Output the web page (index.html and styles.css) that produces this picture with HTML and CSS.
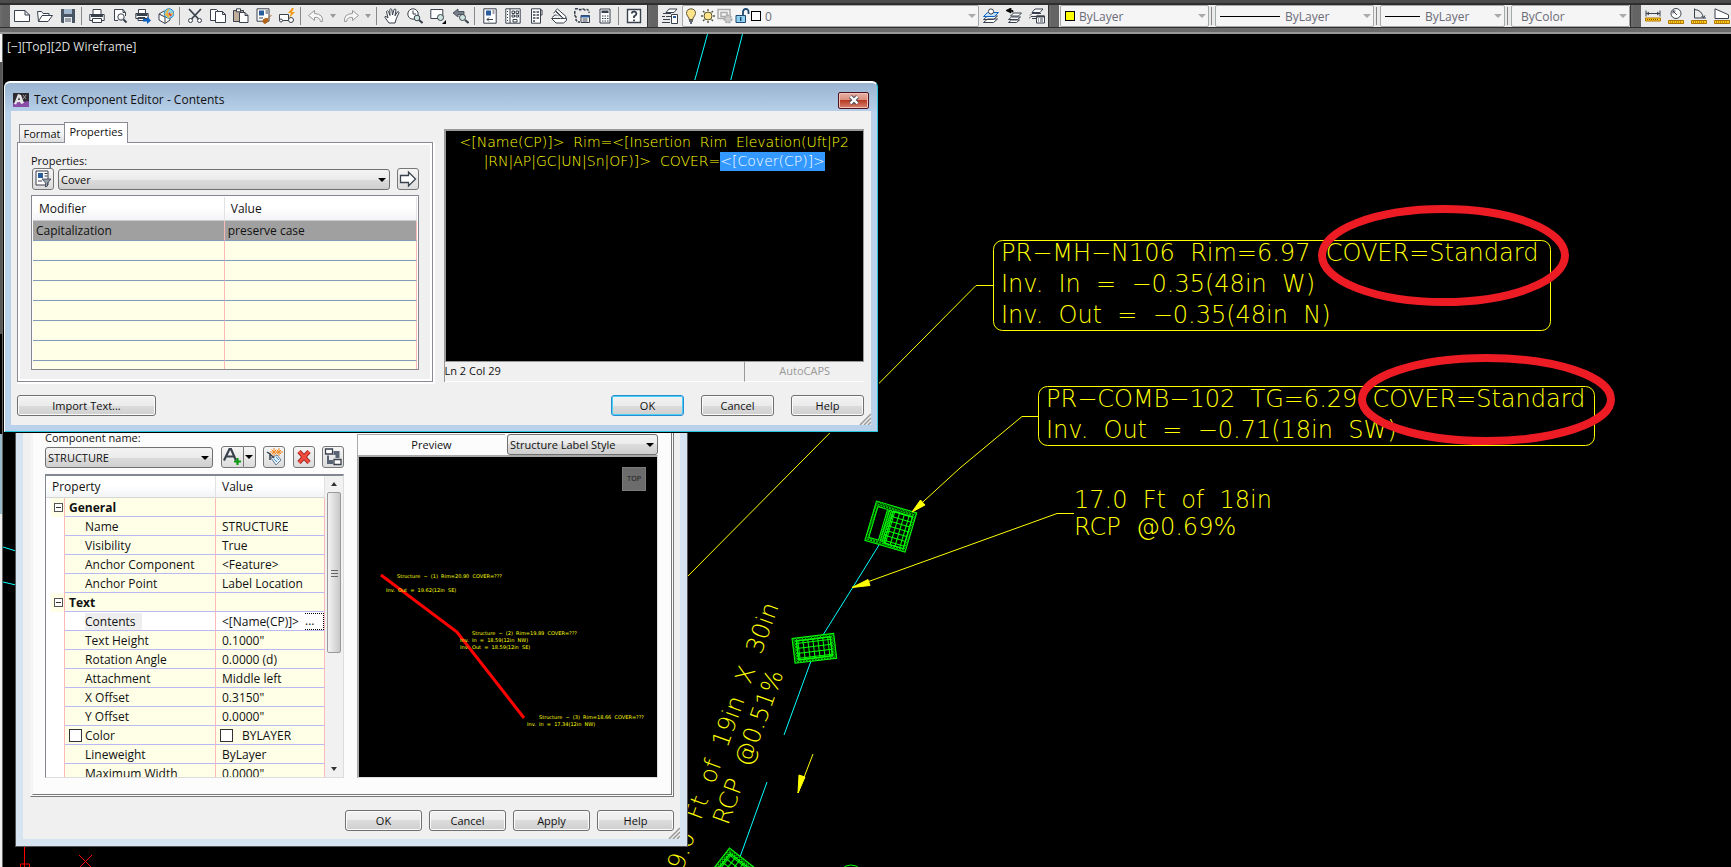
FILE: index.html
```html
<!DOCTYPE html>
<html lang="en">
<head>
<meta charset="utf-8">
<title>Text Component Editor - Contents</title>
<link rel="stylesheet" href="styles.css">
</head>
<body>
<div class="app">
<header class="ribbon">
  <div class="ribbon-strip"></div>
  <div class="toolbars">
    <div class="bar bar-main" role="toolbar" aria-label="Standard">
      <span class="grip"></span>
      <button class="tool" aria-label="New"><svg viewBox="0 0 16 16"><path class="o w" d="M.5 2.500H11l4.500 4.500V13.500H.5zM11 2.500V7h4.500"/></svg></button>
      <button class="tool" aria-label="Open"><svg viewBox="0 0 16 16"><path class="o w" d="M1.500 13.500L.5 3.500h4l1.500 2h6v2M1.500 13.500L5 7.500h10.500L11 13.500z"/></svg></button>
      <button class="tool" aria-label="Save"><svg viewBox="0 0 16 16"><path d="M1 1h14v14H2l-1-1z" fill="#4a5563"/><path d="M4 1h8v5H4z" fill="#9fb6cd"/><path d="M4 9h8v6H4z" fill="#e8edf2"/><path d="M5 11h6M5 13h6" stroke="#4a5563"/></svg></button>
      <span class="sep"></span>
      <button class="tool" aria-label="Print"><svg viewBox="0 0 16 16"><path class="o w" d="M4 6V1.500h8V6M.8 6.500h14.400v6H.8z"/><path class="o w" d="M3.500 10.500h9v4h-9z"/><path d="M2 8h12" stroke="#39414d" stroke-width="2"/></svg></button>
      <button class="tool" aria-label="Preview"><svg viewBox="0 0 16 16"><path class="o w" d="M2.500 12.500v-11H11l2.500 3V8M2.500 12.500H6M11 1.500v3h2.500"/><circle class="o" cx="9" cy="9" r="3.200" fill="#cfe6df"/><path class="o" stroke-width="2" d="M11.500 11.500l3 3"/></svg></button>
      <button class="tool" aria-label="Publish"><svg viewBox="0 0 16 16"><path class="o w" d="M3.500 5V1.500h7V5M.8 5.500h12.400v5H.8zM3 9.500h7v3H3z"/><path d="M1.500 7h11" stroke="#39414d" stroke-width="2"/><path d="M8 11h4V8.500l4 4-4 3.500v-2.500H8z" fill="#0b62c4"/></svg></button>
      <button class="tool" aria-label="3D DWF"><svg viewBox="0 0 16 16"><path class="o w" d="M1 6l5-3 6 3v6l-5 3.500L1 12zM1 6l6 3 5-3M7 9v6"/><circle cx="11" cy="5.500" r="4.800" fill="#8fd0ea" stroke="#2b8ac4"/><path d="M11 1q-4 4 0 9M7 6q4 3 8-1" fill="none" stroke="#f1b434" stroke-width="1.600"/><path d="M11 5l2 3" stroke="#e33" stroke-width="1.500"/></svg></button>
      <span class="sep"></span>
      <button class="tool" aria-label="Cut"><svg viewBox="0 0 16 16"><path d="M2 1l9.500 10M14 1L4.500 11" stroke="#39414d" stroke-width="1.800"/><circle class="o w" cx="3.500" cy="12.500" r="2"/><circle class="o w" cx="12.500" cy="12.500" r="2"/></svg></button>
      <button class="tool" aria-label="Copy"><svg viewBox="0 0 16 16"><path class="o w" d="M.5 1.500h6l2 2v9h-8z"/><path class="o w" d="M5.500 3.500h7l3 3v8h-10zM12.500 3.500v3h3"/></svg></button>
      <button class="tool" aria-label="Paste"><svg viewBox="0 0 16 16"><path class="o" style="fill:#c0ae9a" d="M.5 2.500h10v11H.5z"/><path class="o w" d="M3.500.8h4v3h-4z"/><path class="o w" d="M6.500 4.500H12l3 3v7H6.500zM12 4.500v3h3"/></svg></button>
      <button class="tool" aria-label="Match properties"><svg viewBox="0 0 16 16"><path class="o w" d="M1 .8h12v12.400H1z"/><path d="M3 2.500h5v5H3z" fill="#2a5d9c"/><path d="M9.500 3h2.500M9.500 5h2.500M3 10h4" stroke="#39414d"/><path d="M15.500 7l-4 4M7 12q3-3 5-1 1 3-3 4.500-2 0-2-3.500z" fill="#b4641a" stroke="#b4641a"/></svg></button>
      <button class="tool" aria-label="Block editor"><svg viewBox="0 0 16 16"><path class="o w" d="M.5 6.500h9v6h-9z"/><circle class="o w" cx="2" cy="12.500" r="1.500"/><circle class="o w" cx="12" cy="12" r="2.500"/><path d="M13 0l-4 5h3l-2 5 6-6h-3l2-4z" fill="#f49a1a"/></svg></button>
      <span class="sep"></span>
      <button class="tool" aria-label="Undo"><svg viewBox="0 0 16 16"><path class="g" d="M6.500 2.500l-6 5 6 5V9.500q5-1 6 4h2Q15.500 6 6.500 5.500z"/></svg></button>
      <button class="drop" aria-label="Undo list"></button>
      <button class="tool" aria-label="Redo"><svg viewBox="0 0 16 16"><path class="g" d="M9.500 2.500l6 5-6 5V9.500q-5-1-6 4h-2Q.5 6 9.500 5.500z"/></svg></button>
      <button class="drop" aria-label="Redo list"></button>
      <span class="sep"></span>
      <button class="tool" aria-label="Pan"><svg viewBox="0 0 16 16"><path class="o w" d="M5 15L1 9.500q-.5-1.500 1-1L4 10 2.500 3.500q1-1.500 2 0L6 7.500 5.800 1.500q1-1.500 2 0L8.500 7 10 1.500q1.300-1 2 .2L11 7.800l2.500-4q1.500-.5 1.500 1L12.500 10 11 15z"/></svg></button>
      <button class="tool" aria-label="Zoom realtime"><svg viewBox="0 0 16 16"><circle class="o w" cx="6" cy="6" r="5.200"/><path class="o" d="M6 2.500V6h3"/><circle class="o lens" cx="10" cy="10" r="2.800"/><path class="o" stroke-width="2" d="M12 12l3.500 3"/></svg></button>
      <button class="tool" aria-label="Zoom window"><svg viewBox="0 0 16 16"><path class="o w" d="M.8 1.500h12v9H.8z"/><circle class="o lens" cx="10.500" cy="9.500" r="3"/><path d="M16 12v4h-4z"/></svg></button>
      <button class="tool" aria-label="Zoom previous"><svg viewBox="0 0 16 16"><path d="M5 1L0 5l5 4V6.500h6v-3H5z" fill="#777f89" stroke="#39414d" stroke-width=".8"/><circle class="o lens" cx="9.500" cy="9.500" r="3"/><path class="o" stroke-width="2" d="M12 12l3.500 3"/></svg></button>
      <span class="sep"></span>
      <button class="tool" aria-label="Properties palette"><svg viewBox="0 0 16 16"><path class="o w" d="M1.800.8h12.400v14.400H1.800z"/><path d="M4 2.500h5v5H4z" fill="#2a5d9c"/><path d="M10.500 3h2M10.500 5h2M5 11.500h6M7 9.500l-2 2 2 2" fill="none" stroke="#39414d"/></svg></button>
      <button class="tool" aria-label="Design center"><svg viewBox="0 0 16 16"><path class="o w" d="M.8.8h14.400v14.400H.8zM5 1v14"/><path d="M2.500 3v10" stroke="#39414d" stroke-dasharray="1 2"/><path class="o" d="M7 3h2.500v2.500H7zM11 3h2.500v2.500H11zM7 7h2.500v2H7zM11 7h2.500v2H11zM8 11.500h4V14H8z"/></svg></button>
      <button class="tool" aria-label="Tool palettes"><svg viewBox="0 0 16 16"><path class="o w" d="M3.500.8h9v14.400h-9zM12.500 2H14v5h-1.500"/><path d="M5 4h6M5 7h6M5 10h6M5 13h2" stroke="#6a737d" stroke-width="2" stroke-dasharray="2.500 1"/></svg></button>
      <button class="tool" aria-label="Sheet sets"><svg viewBox="0 0 16 16"><path class="o w" d="M.5 10.500h9l6 0v2l-3 2.500H5zM1 9.500l3-2.500h5"/><path class="o w" d="M4.500 2.500l2-1.500 8.500 7.500q.5 2-1.500 2-1 0-2-1zM2.500 5l2-1.500 6 5.500"/></svg></button>
      <button class="tool" aria-label="Markup"><svg viewBox="0 0 16 16"><path d="M1 1q3-1 5 1 3-2 5 0 4-2 4 3M1 3q-1 5 1 6-1 5 4 5" fill="none" stroke="#39414d" stroke-width="1.500" stroke-dasharray="3 1"/><path class="o w" d="M7 7.500h8.500v7H7z"/><path d="M7 8.500h8.500" stroke="#2a5d9c" stroke-width="2"/><path d="M8.500 11h5M8.500 13h5" stroke="#39414d"/></svg></button>
      <button class="tool" aria-label="Calculator"><svg viewBox="0 0 16 16"><path class="o w" d="M3 1h10v14H3z"/><path d="M4.500 2.500h7V5h-7z" fill="#39414d"/><path d="M5 8h7M5 10.500h7M5 13h7" stroke="#39414d" stroke-dasharray="1.500 1"/></svg></button>
      <span class="sep"></span>
      <button class="tool" aria-label="Help"><svg viewBox="0 0 16 16"><path class="o w" stroke-width="1.400" d="M1.500 1.500h13v13h-13z"/><path d="M5.500 5.500Q6 3.500 8 3.500t2.500 2Q10.500 7 8 8.500v1.500M8 11.500v1.800" fill="none" stroke="#39414d" stroke-width="1.800"/></svg></button>
    </div>
    <div class="bar bar-layers" role="toolbar" aria-label="Layers">
      <span class="grip"></span>
      <button class="tool" aria-label="Layer properties"><svg viewBox="0 0 16 16"><path class="o w" d="M4 4.500L7 1h8l-3 3.500zM1 5.500h8M4 8.500h5M0 8.500h3M1 11.500h7M0 14.500h8"/><path class="o w" d="M9.500 6.500h6v9h-6z"/><path d="M11 8h3v2h-3z" fill="#2a5d9c"/></svg></button>
      <span class="field field-layer">
        <span class="layer-icons" aria-hidden="true">
          <svg viewBox="0 0 16 16"><path d="M8 .8q-4.500.2-4.500 4.700Q4 8 6 10v1.500h4V10q2-2 2.500-4.500Q12.500 1 8 .8z" fill="#ffe48a" stroke="#5c5638"/><path d="M6 13h4M7 15h2" stroke="#39414d" stroke-width="1.600"/></svg>
          <svg viewBox="0 0 16 16"><circle cx="8" cy="8" r="4" fill="#ffe48a" stroke="#5c5638"/><path d="M8 1v2M8 13v2M1 8h2M13 8h2M3 3l1.500 1.500M11.500 11.500L13 13M13 3l-1.500 1.500M3 13l1.500-1.500" stroke="#5c5638" stroke-width="1.400"/></svg>
          <svg viewBox="0 0 16 16"><path d="M1 1.500h12v9H1zM4 4.500h6v4H4z" fill="none" stroke="#aaa" stroke-width="1.500"/><circle cx="11" cy="11" r="3.500" fill="#ccc" stroke="#aaa" stroke-dasharray="2 1" stroke-width="2"/></svg>
          <svg viewBox="0 0 16 16"><path d="M9 7.500V4q0-3 2.800-3T14.500 4v2" fill="none" stroke="#1d4a70" stroke-width="1.800"/><path d="M2 7.500h9.500v7H2z" fill="#8fd0f0" stroke="#1d4a70"/><path d="M6.700 9v4" stroke="#1d4a70" stroke-width="1.500"/></svg>
          <span class="swatch white"></span>
        </span>
        <select aria-label="Layer"><option>0</option></select>
      </span>
      <button class="tool" aria-label="Make current"><svg viewBox="0 0 16 16"><path class="o w" d="M.5 14.500l4-3.500h10l-4 3.500zM.5 11.500l4-3.500h10l-4 3.500z"/><path d="M.5 8.500l4-4h11l-4 4z" fill="#bfe0fa" stroke="#0b62c4"/><circle class="o w" cx="8" cy="3.500" r="2.600"/></svg></button>
      <button class="tool" aria-label="Layer previous"><svg viewBox="0 0 16 16"><path d="M5 0v5L0 2.500zM4 2.500h3v2" stroke="#000" stroke-width=".8"/><path class="o w" d="M2.500 14.500l3-2.500h8l-3 2.500zM2.500 11.500l3-2.500h9l-3 2.500zM4.500 8l3-3h8l-3 3z"/></svg></button>
      <button class="tool" aria-label="Layer states"><svg viewBox="0 0 16 16"><path class="o w" d="M3 4.500L6 1h8l-3 3.500zM1 7.500l2-2h9M0 10.500l2-2h5M3 10.500h4"/><path class="o w" d="M7.500 8h8v7h-8z"/><path d="M7.500 8.500h8" stroke="#39414d" stroke-width="2"/><path d="M9 11h5M9 13h5" stroke="#39414d" stroke-dasharray="1 1 3"/></svg></button>
    </div>
    <div class="bar bar-props" role="toolbar" aria-label="Object properties">
      <span class="grip"></span>
      <span class="field field-color"><span class="swatch yellow"></span><select aria-label="Color"><option>ByLayer</option></select></span>
      <span class="sep"></span>
      <span class="field field-line"><span class="rule"></span><select aria-label="Linetype"><option>ByLayer</option></select></span>
      <span class="sep"></span>
      <span class="field field-weight"><span class="rule"></span><select aria-label="Lineweight"><option>ByLayer</option></select></span>
      <span class="sep"></span>
      <span class="field field-plot"><select aria-label="Plot style"><option>ByColor</option></select></span>
    </div>
    <div class="bar bar-inquiry" role="toolbar" aria-label="Measure">
      <span class="grip"></span>
      <button class="tool" aria-label="Distance"><svg viewBox="0 0 16 16"><path class="o" d="M1 2.500v6M15 2.500v6M1 5.500h14M4 4L2 5.500 4 7M12 4l2 1.500L12 7"/><path d="M.5 10h15v3H.5z" fill="#ffd21e" stroke="#b57400"/><path d="M2 11.500h12" stroke="#7a4b00" stroke-dasharray="1 1"/></svg></button>
      <button class="tool" aria-label="Radius"><svg viewBox="0 0 16 16"><circle class="o w" cx="8" cy="5.500" r="5"/><path class="o" d="M9 7L5 3M5 5.500V3h2.500"/><path d="M.5 12.500h15v3H.5z" fill="#ffd21e" stroke="#b57400"/><path d="M2 14h12" stroke="#7a4b00" stroke-dasharray="1 1"/></svg></button>
      <button class="tool" aria-label="Angle"><svg viewBox="0 0 16 16"><path class="o" d="M3.500.5v9.500H15M3.500 1.500Q11 2 12.500 10M10.500 8l2 2 1.500-2.500"/><path d="M.5 12.500h15v3H.5z" fill="#ffd21e" stroke="#b57400"/><path d="M2 14h12" stroke="#7a4b00" stroke-dasharray="1 1"/></svg></button>
      <button class="tool" aria-label="Area"><svg viewBox="0 0 16 16"><path class="o w" d="M1 10.500V.8l13.500 6v3.700z"/><path d="M.5 12.500h15v3H.5z" fill="#ffd21e" stroke="#b57400"/><path d="M2 14h12" stroke="#7a4b00" stroke-dasharray="1 1"/></svg></button>
    </div>
  </div>
</header>

<main class="viewport">
  <svg class="drawing" aria-label="Drawing" role="img">
    <defs>
      <pattern id="grid" width="5" height="5" patternUnits="userSpaceOnUse"><path d="M0 .5h5M.5 0v5" stroke="#0f0" stroke-width="1.200"/></pattern>
      <pattern id="rim" width="3" height="3" patternUnits="userSpaceOnUse"><path d="M0 0l3 3M3 0L0 3" stroke="#0f0" stroke-width=".8"/></pattern>
    </defs>
    <g transform="translate(0 -34)">
      <g class="cyan">
        <path d="M707.500 34L694 83M742.500 34L730 83M3 547l13 4M3 582l13 3M879 545L853 587 823 635M811 661L784 735M767 782L740 857"/>
      </g>
      <g class="red"><path d="M24.500 847v20M20.500 867v-3h9v3M79 855l13 13M92 855l-13 13"/></g>
      <g class="green">
        <g transform="translate(876.500 501) rotate(16.500)">
          <path d="M0 0h42v41H0z" fill="url(#rim)"/><path d="M3 5h10v32H3z" fill="#000"/><path d="M15 5h2v32h-2z" fill="none"/><path d="M19 5h20v33H19z" fill="#000"/><path d="M19 5h20v33H19z" fill="url(#grid)"/>
        </g>
        <g transform="translate(792 638.500) rotate(-7)">
          <path d="M0 0h42v25H0z" fill="url(#rim)"/><path d="M4 3h34v19H4z" fill="#000"/><path d="M4 3h34v19H4z" fill="url(#grid)"/>
        </g>
        <g transform="translate(729.500 848) rotate(38)">
          <path d="M0 0h42v42H0z" fill="url(#rim)"/><path d="M4 4h34v34H4z" fill="#000"/><path d="M4 4h34v34H4z" fill="url(#grid)"/>
        </g>
        <circle cx="851" cy="878" r="13" fill="none"/>
      </g>
      <g class="yellow">
        <path d="M688 576L976 285.500H993M912 512L960 468 1022 416.500H1038M852 587.500L1057 513.500H1074M813 754L798 793"/>
        <rect x="993.500" y="240.500" width="557" height="90" rx="9"/>
        <rect x="1038.500" y="386.500" width="556" height="59" rx="9"/>
        <path class="solid" d="M912 512l8.500-12 4.500 5zM852 587.500l16-8 2 6zM798 793l1-18 6 2z"/>
      </g>
      <g class="cad">
        <text x="1001" y="261">PR−MH−N106  Rim=6.97  COVER=Standard</text>
        <text x="1001" y="292">Inv.  In  =  −0.35(48in  W)</text>
        <text x="1001" y="323">Inv.  Out  =  −0.35(48in  N)</text>
        <text x="1046" y="407">PR−COMB−102  TG=6.29  COVER=Standard</text>
        <text x="1046" y="438">Inv.  Out  =  −0.71(18in  SW)</text>
        <text x="1074" y="508">17.0  Ft  of  18in</text>
        <text x="1074" y="535">RCP  @0.69%</text>
        <text text-anchor="end" transform="translate(779 606) rotate(-70)">9.0  Ft  of  19in  X  30in</text>
        <text transform="translate(728 826) rotate(-70)">RCP  @0.51%</text>
      </g>
      <g class="marker">
        <ellipse cx="1443.500" cy="255.500" rx="121.500" ry="46.500"/>
        <ellipse cx="1486.500" cy="399.500" rx="124.500" ry="41.500"/>
      </g>
    </g>
  </svg>
  <p class="view-label">[−][Top][2D Wireframe]</p>
</main>
<div class="edge" aria-hidden="true"></div>

<section class="window composer" aria-label="Label Style Composer">
  <div class="composer-body">
    <div class="composer-panel">
      <div class="component-side">
        <label class="label" for="component">Component name:</label>
        <div class="component-row">
          <span class="combo combo-component"><select id="component"><option>STRUCTURE</option></select></span>
          <span class="split"><button class="icon-btn" aria-label="Add component"><svg viewBox="0 0 20 20"><path d="M2 13.500L7.500 2h1.500L14 13.500M4.500 9.500h7.500" fill="none" stroke="#39414d" stroke-width="2.200"/><path d="M15.500 11v7M12 14.500h7" stroke="#0a9a12" stroke-width="2.200"/></svg></button><button class="icon-btn arrow" aria-label="Component types"></button></span>
          <button class="icon-btn" aria-label="Copy component"><svg viewBox="0 0 20 20"><path d="M7 11l6-3 4 5-5 5z" fill="#dff0fa" stroke="#6a7f92"/><path d="M10 12l3 3M12 10l3 3" stroke="#4a90c0"/><path d="M3 5l3 2v6M6 7l4 4" fill="none" stroke="#39414d" stroke-width="1.500"/><path d="M10 1v8M6 5h8M7.500 2.500l5 5M12.500 2.500l-5 5M15 1v8M12 5h7M13 3l4 4M17 3l-4 4" stroke="#f08a24"/></svg></button>
          <button class="icon-btn" aria-label="Delete component"><svg viewBox="0 0 20 20"><path d="M5 4.500l10 11M15 4.500L5 15.500" stroke="#8c1d1d" stroke-width="4.500"/><path d="M5 4.500l10 11M15 4.500L5 15.500" stroke="#f04b3c" stroke-width="3"/></svg></button>
          <button class="icon-btn" aria-label="Draw order"><svg viewBox="0 0 20 20"><path class="o w" stroke-width="1.300" d="M2.500 2h7v5h-7zM11 12.500h7v5h-7z"/><path d="M10.500 4h6v7h-4v-3h-2zM4 8.500h2V13h4v4H4z" fill="#596574"/></svg></button>
        </div>
        <div class="prop-box">
          <div class="prop-scroll">
            <table class="props">
              <colgroup><col class="col-gutter"><col class="col-name"><col></colgroup>
              <thead><tr><th colspan="2">Property</th><th>Value</th></tr></thead>
              <tbody>
                <tr class="group"><td class="gut"><button class="toggle" aria-label="Collapse General"></button></td><th>General</th><td></td></tr>
                <tr><td class="gut"></td><td class="nm">Name</td><td>STRUCTURE</td></tr>
                <tr><td class="gut"></td><td class="nm">Visibility</td><td>True</td></tr>
                <tr><td class="gut"></td><td class="nm">Anchor Component</td><td>&lt;Feature&gt;</td></tr>
                <tr><td class="gut"></td><td class="nm">Anchor Point</td><td>Label Location</td></tr>
                <tr class="group"><td class="gut"><button class="toggle" aria-label="Collapse Text"></button></td><th>Text</th><td></td></tr>
                <tr class="current"><td class="gut"></td><td class="nm"><span>Contents</span></td><td><span class="value-row">&lt;[Name(CP)]&gt;<button class="more" aria-label="Edit contents">...</button></span></td></tr>
                <tr><td class="gut"></td><td class="nm">Text Height</td><td>0.1000"</td></tr>
                <tr><td class="gut"></td><td class="nm">Rotation Angle</td><td>0.0000 (d)</td></tr>
                <tr><td class="gut"></td><td class="nm">Attachment</td><td>Middle left</td></tr>
                <tr><td class="gut"></td><td class="nm">X Offset</td><td>0.3150"</td></tr>
                <tr><td class="gut"></td><td class="nm">Y Offset</td><td>0.0000"</td></tr>
                <tr><td class="gut"></td><td class="nm checked"><label><input type="checkbox">Color</label></td><td class="checked"><label><input type="checkbox"><span class="bylayer">BYLAYER</span></label></td></tr>
                <tr><td class="gut"></td><td class="nm">Lineweight</td><td>ByLayer</td></tr>
                <tr><td class="gut"></td><td class="nm">Maximum Width</td><td>0.0000"</td></tr>
              </tbody>
            </table>
          </div>
          <div class="scrollbar" aria-hidden="true"><span class="sb-up"></span><span class="thumb"></span><span class="sb-down"></span></div>
        </div>
      </div>
      <div class="preview-side">
        <div class="preview-head">
          <span class="preview-tab">Preview</span>
          <span class="combo combo-preview"><select aria-label="Preview style"><option>Structure Label Style</option></select></span>
        </div>
        <div class="preview-box">
          <svg class="preview" role="img" aria-label="Label preview">
            <path d="M22 118L98 175 165 261" fill="none" stroke="#f00" stroke-width="3"/>
            <g class="tiny">
              <text x="38" y="121">Structure  −  (1)  Rim=20.90  COVER=???</text>
              <text x="27" y="135">Inv.  Out  =  19.62(12in  SE)</text>
              <text x="113" y="178">Structure  −  (2)  Rim=19.89  COVER=???</text>
              <text x="101" y="185">Inv.  In  =  18.59(12in  NW)</text>
              <text x="101" y="192">Inv.  Out  =  18.59(12in  SE)</text>
              <text x="180" y="262">Structure  −  (3)  Rim=18.66  COVER=???</text>
              <text x="168" y="269">Inv.  In  =  17.34(12in  NW)</text>
            </g>
          </svg>
          <span class="cube">TOP</span>
        </div>
      </div>
    </div>
    <div class="composer-buttons">
      <button class="btn">OK</button><button class="btn">Cancel</button><button class="btn">Apply</button><button class="btn">Help</button>
    </div>
    <svg class="size-grip" viewBox="0 0 12 12" aria-hidden="true"><path d="M1 12L12 1M5 12l7-7M9 12l3-3" stroke="#999" stroke-width="1.500"/></svg>
  </div>
</section>

<section class="window editor" role="dialog" aria-labelledby="editor-title">
  <header class="titlebar">
    <svg class="app-icon" viewBox="0 0 16 16" aria-hidden="true"><path d="M0 1h16v14H0z" fill="#2e2b33"/><path d="M0 11l16-2v6H0z" fill="#8a4aa8"/><path d="M1 12L5 2l3 1 3 8-3 1-1-2-3 .500-.8 2zM5 8h2L6 5z" fill="#e6e6e6"/><path d="M10 3l3 4M13 3l-3 4" stroke="#999"/></svg>
    <h1 id="editor-title">Text Component Editor - Contents</h1>
    <button class="close" aria-label="Close"><svg viewBox="0 0 12 10"><path d="M2.500 1.500l7 7M9.500 1.500l-7 7" stroke="#4a4a55" stroke-width="4.200"/><path d="M2.500 1.500l7 7M9.500 1.500l-7 7" stroke="#fff" stroke-width="2.400"/></svg></button>
  </header>
  <div class="editor-body">
    <div class="editor-main">
      <div class="tabs-side">
        <div class="tabs" role="tablist"><button role="tab" class="tab">Format</button><button role="tab" class="tab active" aria-selected="true">Properties</button></div>
        <div class="tab-panel">
          <label class="label" for="prop">Properties:</label>
          <div class="pick-row">
            <button class="icon-btn" aria-label="Filter properties"><svg viewBox="0 0 20 20"><path class="o w" d="M3 2h12v14H3z"/><path d="M5 4h5v5H5z" fill="#2a5d9c"/><path d="M11.500 4.500h3M11.500 7h3M5 12h4" stroke="#39414d"/><path d="M9 10h9l-3.500 4v3l-2 1v-4z" fill="#98a1ab" stroke="#39414d" stroke-width=".8"/></svg></button>
            <span class="combo combo-prop"><select id="prop"><option>Cover</option></select></span>
            <button class="icon-btn" aria-label="Insert property"><svg viewBox="0 0 20 20"><path class="o w" stroke-width="1.300" d="M2.500 6.500h8V3l7 7-7 7v-3.500h-8z"/></svg></button>
          </div>
          <div class="mod-box">
            <table class="mods">
              <thead><tr><th>Modifier</th><th>Value</th></tr></thead>
              <tbody>
                <tr class="selected"><td>Capitalization</td><td>preserve case</td></tr>
                <tr><td></td><td></td></tr><tr><td></td><td></td></tr><tr><td></td><td></td></tr><tr><td></td><td></td></tr><tr><td></td><td></td></tr><tr><td></td><td></td></tr><tr><td></td><td></td></tr>
              </tbody>
            </table>
          </div>
        </div>
      </div>
      <div class="text-side">
        <div class="text-area" role="textbox" contenteditable="true" aria-label="Contents" spellcheck="false">&lt;[Name(CP)]&gt;  Rim=&lt;[Insertion  Rim  Elevation(Uft|P2<br>|RN|AP|GC|UN|Sn|OF)]&gt;  COVER=<mark>&lt;[Cover(CP)]&gt;</mark></div>
        <div class="status"><span>Ln 2 Col 29</span><span class="caps">AutoCAPS</span></div>
      </div>
    </div>
    <div class="editor-buttons">
      <button class="btn import">Import Text...</button>
      <button class="btn default">OK</button><button class="btn">Cancel</button><button class="btn">Help</button>
    </div>
    <svg class="size-grip" viewBox="0 0 12 12" aria-hidden="true"><path d="M1 12L12 1M5 12l7-7M9 12l3-3" stroke="#999" stroke-width="1.500"/></svg>
  </div>
</section>
</div>
</body>
</html>
```
FILE: styles.css
```css
* { box-sizing: border-box; }
body { margin: 0; background: #000; color: #111; font: 12px/15px "Open Sans", "Noto Sans", sans-serif; }
button, select, input { font: inherit; color: inherit; margin: 0; padding: 0; }
svg { display: block; }
.o { fill: none; stroke: #39414d; }
.w { fill: #fff; }
.lens { fill: #cfe6df; }
.g { fill: #f6f6f6; stroke: #999; }

.app { position: relative; height: 100vh; display: flex; flex-direction: column; overflow: hidden; }

/* Toolbars */
.ribbon { background: #6b6b6b; border-bottom: 2px solid #999; height: 34px; flex: none; }
.ribbon-strip { height: 5px; background: #4c4c4c; border-bottom: 2px solid #2e2e2e; }
.toolbars { display: flex; height: 23px; padding-left: 2px; gap: 2px; border-bottom: 1px solid #2e2e2e; }
.bar { display: flex; align-items: center; background: #ebebeb; flex: none; border-right: 1px solid #333; }
.bar-main { width: 646px; }
.bar-layers { width: 399px; }
.bar-props { width: 580px; }
.bar-inquiry { flex: 1; overflow: hidden; border: 0; }
.grip { width: 8px; height: 100%; background: #646464; flex: none; }
.tool { width: 23px; height: 22px; border: 0; background: none; display: grid; place-items: center; flex: none; }
.tool svg { width: 16px; height: 16px; }
.drop { width: 12px; height: 20px; border: 0; background: none; display: grid; place-items: center; flex: none; }
.drop::after { content: ""; border: 3px solid transparent; border-top: 4px solid #999; border-bottom: 0; }
.sep { width: 1px; height: 18px; background: #888; margin: 0 3px 0 2px; flex: none; }
.field { position: relative; height: 22px; display: block; color: #6c6c78; }
.field select { appearance: none; width: 100%; height: 100%; border: 1px solid #a5a9a9; border-radius: 2px; background: #f5f5f5; outline: 0; padding-left: 18px; line-height: 15px; }
.field::after { content: ""; position: absolute; right: 3px; top: 9px; border: 4px solid transparent; border-top-color: #aaa; border-bottom: 0; pointer-events: none; }
.field-layer { width: 298px; margin-left: 1px; }
.field-layer select { padding-left: 82px; }
.layer-icons { position: absolute; left: 1px; top: 3px; display: flex; gap: 1px; align-items: center; }
.layer-icons svg { width: 16px; height: 16px; }
.swatch { width: 10px; height: 10px; border: 1px solid #000; display: block; }
.swatch.white { background: #fff; }
.swatch.yellow { background: #ff0; position: absolute; left: 5px; top: 6px; }
.rule { position: absolute; left: 5px; top: 11px; height: 1px; background: #000; }
.field-color { width: 149px; margin-left: 1px; }
.field-line { width: 159px; }
.field-line .rule { width: 60px; }
.field-line select { padding-left: 69px; }
.field-weight { width: 125px; }
.field-weight .rule { width: 35px; }
.field-weight select { padding-left: 44px; }
.field-plot { flex: 1; }
.field-plot select { padding-left: 9px; }

/* Model space */
.viewport { flex: 1; position: relative; background: #000; min-height: 0; border-left: 1px solid #666; margin-left: 2px; }
.drawing { position: absolute; left: -3px; top: 0; width: calc(100% + 3px); height: 100%; }
.edge { position: absolute; left: 0; top: 34px; width: 2px; height: 100%; background: linear-gradient(#f4f4f4 0 28px, #555 28px 300px, #000 300px 400px, #9bc 400px 480px, #eee 480px); }
.view-label { position: absolute; left: 4px; top: 5px; margin: 0; color: #ddd; font: 12px/16px "Open Sans", sans-serif; }
.cyan { fill: none; stroke: #0ff; }
.red { fill: none; stroke: #f00; }
.green { stroke: #0f0; }
.yellow { fill: none; stroke: #ff0; }
.yellow .solid { fill: #ff0; }
.cad { fill: #ff0; font: 200 24px "DejaVu Sans Light", "DejaVu Sans ExtraLight", "DejaVu Sans", sans-serif; white-space: pre; }
.cad text, .tiny text { white-space: pre; }
.marker { fill: none; stroke: #ed1c24; stroke-width: 8px; }

/* Shared controls */
.window { position: absolute; }
.label { display: block; height: 15px; }
.btn { height: 21px; width: 77px; border: 1px solid #707070; border-radius: 3px; background: linear-gradient(#f3f3f3, #ebebeb 50%, #dcdcdc 50%, #cfcfcf); box-shadow: inset 0 0 0 1px #fbfbfb; font-size: 11px; }
.icon-btn { width: 22px; height: 22px; border: 1px solid #777; border-radius: 3px; background: linear-gradient(#f6f6f6, #dcdcdc); display: grid; place-items: center; flex: none; }
.icon-btn svg { width: 20px; height: 20px; }
.combo { position: relative; display: block; height: 21px; }
.combo select { appearance: none; width: 100%; height: 100%; border: 1px solid #707070; border-radius: 3px; background: linear-gradient(#f3f3f3, #ebebeb 50%, #dcdcdc 50%, #cfcfcf); padding-left: 2px; font-size: 11px; line-height: 15px; }
.combo::after, .arrow::after { content: ""; border: 4px solid transparent; border-top-color: #000; border-bottom: 0; }
.combo::after { position: absolute; right: 4px; top: 9px; pointer-events: none; }
.size-grip { position: absolute; right: 0; bottom: 0; width: 12px; height: 12px; }
table { border-collapse: separate; border-spacing: 0; table-layout: fixed; width: 100%; }
th { font-weight: 400; text-align: left; }
th, td { padding: 0; white-space: nowrap; overflow: hidden; }

/* Label style composer */
.composer { left: 15px; top: 400px; width: 673px; background: #d6e4f2; border: 1px solid #555; border-top: 0; padding: 0 7px 7px; }
.composer-body { position: relative; background: #f0f0f0; padding: 0 6px 8px 7px; }
.composer-panel { display: grid; grid-template: minmax(0, 1fr) / 299fr 301fr; gap: 13px; height: 397px; padding: 31px 13px 16px 12px; background: #fcfcfc; border: 3px solid #f4f4f4; border-right: 3px double #777; border-bottom: 3px double #777; }
.component-side { display: flex; flex-direction: column; min-width: 0; }
.component-side .label { margin-top: -4px; font-size: 11px; height: 16px; }
.component-row { display: flex; justify-content: space-between; align-items: center; margin-bottom: 6px; }
.combo-component { width: 168px; }
.split { display: flex; }
.split .icon-btn:first-child { border-radius: 3px 0 0 3px; width: 23px; }
.split .arrow { width: 12px; border-left: 0; border-radius: 0 3px 3px 0; }
.prop-box { flex: 1; min-height: 0; display: flex; border: 1px solid #828790; border-width: 2px 1px 1px; border-right-color: #ddd; border-bottom-color: #ddd; background: #fff; }
.prop-scroll { flex: 1; min-width: 0; overflow: hidden; }
.col-gutter { width: 19px; }
.col-name { width: 151px; }
.props thead th { height: 22px; background: linear-gradient(#fff 45%, #f3f4f6); border-bottom: 1px solid #d5d5d5; border-right: 1px solid #e2e2e2; padding-left: 6px; }
.props tbody td, .props tbody th { height: 19px; line-height: 17px; background: #ffffe8; border-bottom: 1px solid #b9b9f5; border-right: 1px solid #fbb8b8; padding-left: 6px; }
.props tbody td.gut { background: #fff; border-bottom: 0; padding: 0; }
.props tbody .group .gut { background: linear-gradient(90deg, #fff 5px, #ffffe8 5px); padding-left: 8px; }
.props tbody td.nm { padding-left: 20px; }
.props tbody th { font-weight: 700; padding-left: 4px; }
.props tbody td.checked { padding-left: 4px; }
.props label { display: flex; align-items: center; gap: 3px; height: 17px; }
.props input { appearance: none; width: 13px; height: 13px; border: 1px solid #333; background: #fff; flex: none; }
.bylayer { margin-left: 6px; }
.toggle { width: 9px; height: 9px; border: 1px solid #555; background: linear-gradient(#333, #333) center / 5px 1px no-repeat #fff; display: block; }
.props tbody .current td:not(.gut) { background: #fff; }
.current .nm span { background: #eee; display: inline-block; padding-right: 6px; }
.value-row { display: flex; justify-content: space-between; }
.more { width: 19px; height: 17px; line-height: 14px; border: 1px dotted #000; border-left: 0; background: none; text-align: left; }
.scrollbar { width: 18px; background: #f1f1f1; display: flex; flex-direction: column; align-items: center; gap: 6px; padding: 6px 2px; }
.sb-up { border: 3px solid transparent; border-bottom: 4px solid #333; border-top: 0; }
.sb-down { border: 3px solid transparent; border-top: 4px solid #333; border-bottom: 0; margin-top: auto; }
.thumb { width: 14px; height: 161px; border: 1px solid #999; border-radius: 2px; background: linear-gradient(#666, #666) center 77px / 7px 1px no-repeat, linear-gradient(#666, #666) center 80px / 7px 1px no-repeat, linear-gradient(#666, #666) center 83px / 7px 1px no-repeat, linear-gradient(90deg, #f4f4f4, #ddd 50%, #c8c8c8); }
.preview-side { display: flex; flex-direction: column; min-width: 0; }
.preview-head { display: flex; justify-content: space-between; gap: 2px; font-size: 11px; }
.preview-tab { flex: 1; height: 21px; line-height: 20px; text-align: center; border: 1px solid #aaa; border-right: 0; border-bottom: 0; }
.combo-preview { width: 151px; }
.preview-box { position: relative; flex: 1; background: #000; border: 1px solid #aaa; border-width: 2px 1px 1px 2px; border-right-color: #ddd; border-bottom-color: #ddd; overflow: hidden; }
.preview { width: 100%; height: 100%; }
.tiny { fill: #ff0; font: 5px "DejaVu Sans", sans-serif; }
.cube { position: absolute; right: 11px; top: 10px; width: 24px; height: 24px; background: #6c6c6c; border: 1px solid #7c7c7c; color: #222; font: 7px/22px "DejaVu Sans", sans-serif; text-align: center; }
.composer-buttons { display: flex; justify-content: flex-end; gap: 7px; margin-top: 13px; }

/* Text component editor */
.editor { left: 4px; top: 81px; width: 874px; background: linear-gradient(#99b4d1, #b9d1ea 30px); border: 1px solid #2bc4de; border-top: 2px solid #fff; border-left: 1px solid #fff; border-radius: 6px 6px 0 0; padding: 0 6px 6px; box-shadow: 0 0 0 1px #000; }
.titlebar { display: flex; align-items: center; height: 28px; padding: 6px 2px 0; gap: 5px; }
.app-icon { width: 16px; height: 16px; }
.titlebar h1 { margin: 0; font-size: 12px; font-weight: 400; line-height: 20px; flex: 1; }
.close { width: 31px; height: 17px; border: 1px solid #4d1420; border-radius: 2px; background: linear-gradient(#e9b3a8, #d98a7a 50%, #b83b24 50%, #d88370); box-shadow: inset 0 0 0 1px #f0c0b6; display: grid; place-items: center; }
.close svg { width: 12px; height: 10px; }
.editor-body { position: relative; background: #f0f0f0; padding: 11px 7px 9px 6px; }
.editor-main { display: grid; grid-template: minmax(0, 1fr) / 416fr 421fr; gap: 11px; height: 260px; }
.tabs-side { display: flex; flex-direction: column; min-width: 0; min-height: 0; }
.tabs { display: flex; align-items: flex-end; padding-left: 2px; }
.tab { height: 18px; width: 45px; border: 1px solid #8a8a94; border-width: 1px 0 0 1px; background: linear-gradient(#f4f4f4 50%, #ddd); font-size: 11px; }
.tab.active { height: 21px; width: 64px; border-right-width: 1px; background: #fff; margin-bottom: -1px; padding-bottom: 3px; z-index: 1; }
.tab-panel { flex: 1; min-height: 0; display: flex; flex-direction: column; border: 1px solid #8a8a94; box-shadow: inset 0 0 0 2px #fff, 1px 1px 0 1px #fff; padding: 10px 13px 11px; }
.tab-panel .label { font-size: 11px; }
.pick-row { display: flex; align-items: center; justify-content: space-between; padding-left: 1px; }
.combo-prop { flex: 1; margin: 1px 7px 0 4px; }
.mod-box { flex: 1; min-height: 0; margin-top: 5px; border: 1px solid #828790; padding: 1px; overflow: hidden; background: #fff; }
.mods thead th { height: 24px; background: linear-gradient(#fff 45%, #f3f4f6); border-bottom: 1px solid #ccc; border-right: 1px solid #e2e2e2; padding-left: 6px; }
.mods tbody td { height: 20px; background: #ffffe8; border-bottom: 1px solid #7f9db9; border-right: 1px solid #fbb8b8; padding-left: 3px; }
.mods tbody .selected td { background: #a0a0a0; }
.text-side { display: flex; flex-direction: column; margin-top: 7px; min-width: 0; min-height: 0; }
.text-area { flex: 1; min-height: 0; background: #000; color: #ff0; border: 1px solid #999; border-width: 2px 1px 1px 2px; padding-top: 2px; text-align: center; font: 200 14px/19px "DejaVu Sans Light", "DejaVu Sans ExtraLight", "DejaVu Sans", sans-serif; white-space: pre; overflow: hidden; }
.text-area mark { background: #39f; color: #fff; display: inline-block; }
.status { display: flex; height: 20px; font-size: 11px; line-height: 17px; border-left: 1px solid #999; }
.status span { flex: 301; border-bottom: 1px solid #fff; }
.status .caps { flex: 119; border-left: 1px solid #999; text-align: center; color: #999; }
.editor-buttons { display: flex; gap: 17px; margin-top: 13px; }
.editor-buttons .btn { width: 73px; }
.editor-buttons .import { width: 139px; margin-right: auto; }
.btn.default { border-color: #2a8dd4; box-shadow: inset 0 0 0 1px #45d0f4; }
```
